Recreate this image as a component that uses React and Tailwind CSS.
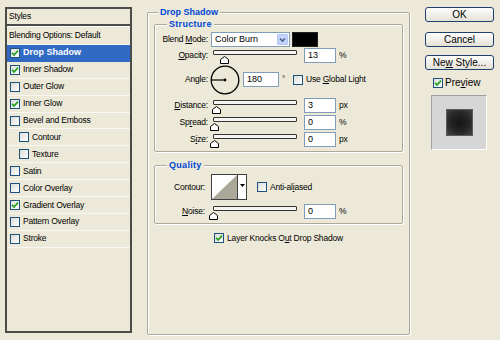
import React from 'react';

const styleRows = [
    { label: 'Drop Shadow', on: true, active: true },
    { label: 'Inner Shadow', on: true },
    { label: 'Outer Glow', on: false },
    { label: 'Inner Glow', on: true },
    { label: 'Bevel and Emboss', on: false },
    { label: 'Contour', on: false, indent: true },
    { label: 'Texture', on: false, indent: true },
    { label: 'Satin', on: false },
    { label: 'Color Overlay', on: false },
    { label: 'Gradient Overlay', on: true },
    { label: 'Pattern Overlay', on: false },
    { label: 'Stroke', on: false },
];

const Check = ({ on }) => (
    <span className="w-[10px] h-[10px] shrink-0 border border-[#1c5180] bg-gradient-to-br from-[#dcdcd7] to-white flex items-center justify-center">
        {on && (
            <svg width="8" height="8" viewBox="0 0 8 8">
                <path d="M1 3.8 L3 6 L7 1.6" stroke="#21a121" strokeWidth="1.7" fill="none" />
            </svg>
        )}
    </span>
);

const Field = ({ value, w = 'w-[32px]' }) => (
    <div className={`${w} h-[15px] border border-[#7f9db9] bg-white pl-[3px] flex items-center text-[9px] tracking-normal`}>
        {value}
    </div>
);

const Thumb = ({ left }) => (
    <svg className={`absolute top-[6px] ${left}`} width="9" height="8" viewBox="0 0 9 8">
        <polygon points="0.5,7.5 0.5,3.5 4.5,0.5 8.5,3.5 8.5,7.5" fill="#fff" stroke="#000" strokeWidth="1" />
    </svg>
);

const Slider = ({ left }) => (
    <div className="relative w-[84px] h-[15px] ml-[2px]">
        <div className="mt-[4px] h-[5px] border border-[#333] bg-[#f6f5f0] rounded-[1px]" />
        <Thumb left={left} />
    </div>
);

const SliderRow = ({ label, value, unit, left, className = '' }) => (
    <div className={`flex items-center h-[15px] ${className}`}>
        <div className="w-[53px] text-right">{label}</div>
        <div className="ml-[3px]">
            <Slider left={left} />
        </div>
        <div className="ml-[7px]">
            <Field value={value} />
        </div>
        <span className="ml-[3px]">{unit}</span>
    </div>
);

const Button = ({ children, className = '' }) => (
    <div className={`w-[69px] h-[15px] rounded-[3px] border border-[#1f3f70] bg-gradient-to-b from-white to-[#e4e1d5] flex items-center justify-center text-[10px] ${className}`}>
        {children}
    </div>
);

export default function App() {
    return (
        <div className="w-[500px] h-[340px] bg-[#ece9d8] flex overflow-hidden text-black font-['Liberation_Sans',Arial,sans-serif]">
            {/* styles list */}
            <div className="ml-[5px] mt-[7px] w-[127px] h-[326px] border-2 border-[#4b4b49] flex flex-col text-[8.5px] tracking-[-0.2px]">
                <div className="h-[17px] shrink-0 pl-[2px] flex items-center border-b-2 border-[#4b4b49]">Styles</div>
                <div className="h-[19px] shrink-0 pl-[2px] flex items-center border-t border-white border-b border-b-[#f8f7f1]">
                    Blending Options: Default
                </div>
                {styleRows.map((r) => (
                    <div
                        key={r.label}
                        className={`h-[16.9px] shrink-0 flex items-center gap-[2px] border-b ${r.indent ? 'pl-[12px]' : 'pl-[3px]'} ${r.active ? 'bg-[#316ac5] text-white font-bold tracking-normal text-[9px] border-[#316ac5]' : 'border-[#f8f7f1]'}`}
                    >
                        <Check on={r.on} />
                        <span className="ml-[1px]">{r.label}</span>
                    </div>
                ))}
            </div>

            {/* options */}
            <fieldset className="ml-[15px] mt-[7px] w-[263px] h-[328px] border border-[#aca899] rounded-[2px] shadow-[inset_1px_1px_0_#fff,1px_1px_0_#fff] px-[6px] text-[8.5px] tracking-[-0.2px]">
                <legend className="ml-[4px] px-[2px] bg-[#ece9d8] leading-[11px] text-[9px] font-bold tracking-normal text-[#0046d5]">Drop Shadow</legend>

                <fieldset className="mt-[1px] h-[133px] border border-[#aca899] rounded-[2px] shadow-[inset_1px_1px_0_#fff,1px_1px_0_#fff] pt-[2px] pb-[3px]">
                    <legend className="ml-[12px] px-[2px] bg-[#ece9d8] leading-[11px] text-[9px] font-bold tracking-[0.3px] text-[#0046d5]">Structure</legend>

                    <div className="flex items-center h-[15px]">
                        <div className="w-[53px] text-right">
                            Blend <u>M</u>ode:
                        </div>
                        <div className="ml-[3px] w-[79px] h-[15px] border border-[#7f9db9] bg-white flex items-center">
                            <span className="flex-1 pl-[3px] text-[9px] tracking-normal">Color Burn</span>
                            <span className="w-[11px] h-[11px] mr-[1px] rounded-[1px] border border-[#b4c6ee] bg-[#c3d3fd] flex items-center justify-center">
                                <svg width="9" height="8" viewBox="0 0 9 8">
                                    <path d="M2 2.5 L4.5 5 L7 2.5" stroke="#4d6185" strokeWidth="1.6" fill="none" />
                                </svg>
                            </span>
                        </div>
                        <div className="ml-[2px] w-[26px] h-[15px] bg-black border border-[#222]" />
                    </div>

                    <SliderRow className="mt-[1px]" label={<><u>O</u>pacity:</>} value="13" unit="%" left="left-[7px]" />

                    <div className="flex items-center h-[29px] mt-[2px]">
                        <div className="w-[53px] text-right">Angle:</div>
                        <svg className="ml-[2px]" width="30" height="30" viewBox="0 0 30 30">
                            <circle cx="15" cy="15" r="13.8" stroke="#000" strokeWidth="1.3" fill="none" />
                            <line x1="1.5" y1="15" x2="15" y2="15" stroke="#000" strokeWidth="1.2" />
                            <circle cx="15" cy="15" r="1.4" fill="#000" />
                        </svg>
                        <div className="ml-[3px]">
                            <Field value="180" w="w-[36px]" />
                        </div>
                        <span className="ml-[3px] self-start mt-[8px] text-[8px]">°</span>
                        <div className="ml-[8px] flex items-center gap-[3px]">
                            <Check on={false} />
                            <span>
                                Use <u>G</u>lobal Light
                            </span>
                        </div>
                    </div>

                    <SliderRow className="mt-[4px]" label={<><u>D</u>istance:</>} value="3" unit="px" left="left-[-1px]" />
                    <SliderRow className="mt-[2px]" label={<>Sp<u>r</u>ead:</>} value="0" unit="%" left="left-[-3px]" />
                    <SliderRow className="mt-[2px]" label={<>S<u>i</u>ze:</>} value="0" unit="px" left="left-[-3px]" />
                </fieldset>

                <fieldset className="mt-[8px] h-[64px] border border-[#aca899] rounded-[2px] shadow-[inset_1px_1px_0_#fff,1px_1px_0_#fff] pt-[3px]">
                    <legend className="ml-[12px] px-[2px] bg-[#ece9d8] leading-[11px] text-[9px] font-bold tracking-[0.3px] text-[#0046d5]">Quality</legend>

                    <div className="flex items-center h-[26px]">
                        <div className="w-[50px] text-right">Contour:</div>
                        <div className="ml-[6px] w-[36px] h-[26px] border border-[#404040] bg-white flex">
                            <svg width="25" height="24" viewBox="0 0 25 24">
                                <polygon points="0,24 25,0 25,24" fill="#aca899" />
                            </svg>
                            <div className="flex-1 border-l border-[#404040] flex justify-center">
                                <svg className="mt-[9px]" width="5" height="3" viewBox="0 0 5 3">
                                    <polygon points="0,0 5,0 2.5,3" fill="#000" />
                                </svg>
                            </div>
                        </div>
                        <div className="ml-[10px] flex items-center gap-[3px]">
                            <Check on={false} />
                            <span>
                                Anti-al<u>i</u>ased
                            </span>
                        </div>
                    </div>

                    <div className="flex items-center h-[15px] mt-[4px]">
                        <div className="w-[50px] text-right">
                            <u>N</u>oise:
                        </div>
                        <div className="ml-[6px]">
                            <Slider left="left-[-4px]" />
                        </div>
                        <div className="ml-[7px]">
                            <Field value="0" />
                        </div>
                        <span className="ml-[3px]">%</span>
                    </div>
                </fieldset>

                <div className="mt-[8px] flex items-center justify-center gap-[3px]">
                    <Check on={true} />
                    <span>
                        Layer Knocks O<u>u</u>t Drop Shadow
                    </span>
                </div>
            </fieldset>

            {/* buttons */}
            <div className="ml-[15px] mt-[7px] flex flex-col">
                <Button>OK</Button>
                <Button className="mt-[10px]">Cancel</Button>
                <Button className="mt-[8px]">
                    <span>
                        Ne<u>w</u> Style...
                    </span>
                </Button>
                <div className="mt-[7px] pl-[8px] h-[11px] flex items-center gap-[2px] text-[10px]">
                    <Check on={true} />
                    <span>
                        Pre<u>v</u>iew
                    </span>
                </div>
                <div className="mt-[7px] ml-[6px] w-[56px] h-[55px] bg-[#d6d6d6] border border-t-[#a0a0a0] border-l-[#a0a0a0] border-b-white border-r-white flex items-center justify-center">
                    <div className="w-[27px] h-[27px] border border-[#5a5a5a] bg-[radial-gradient(circle,#141414_0%,#262626_55%,#444_100%)]" />
                </div>
            </div>
        </div>
    );
}
